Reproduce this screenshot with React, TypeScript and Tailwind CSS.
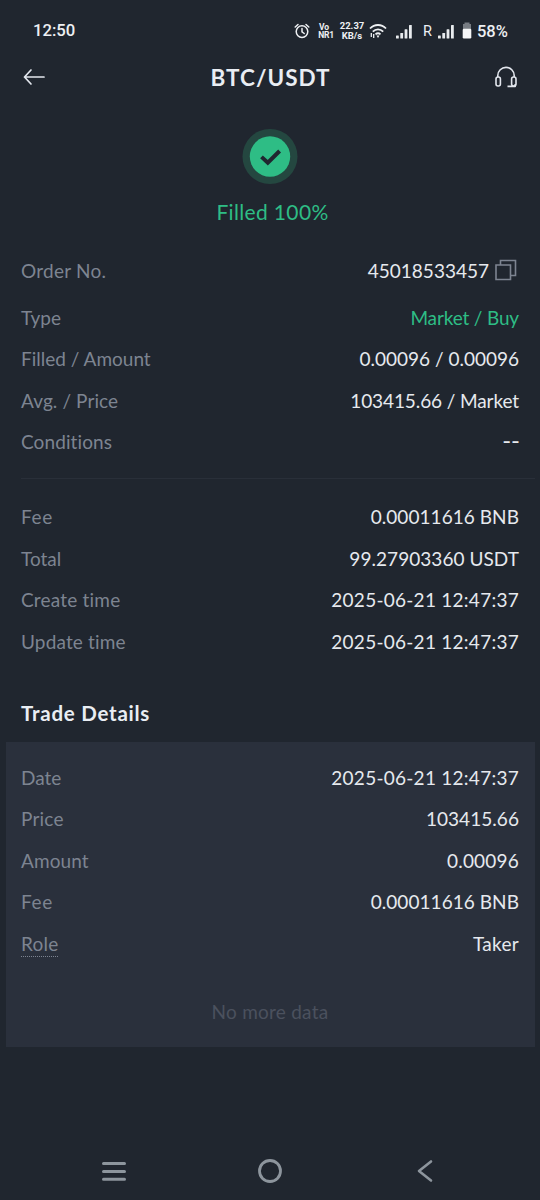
import type { ReactNode } from "react";

type RowProps = {
  label: string;
  value: ReactNode;
  labelClass?: string;
  valueClass?: string;
  height?: string;
};

function Row({ label, value, labelClass = "", valueClass = "text-[#e6e9ee]", height = "h-[41.5px]" }: RowProps) {
  return (
    <div className={`flex items-center justify-between ${height}`}>
      <span className={`text-[#7d8491] ${labelClass}`}>{label}</span>
      <span className={valueClass}>{value}</span>
    </div>
  );
}

const DATE = "text-[#e6e9ee] tracking-[0.26px]";
const AMOUNT = "text-[#e6e9ee] tracking-[0.05px]";

function Signal() {
  return (
    <svg width="16" height="15" viewBox="0 0 16 15" fill="#e8ebee">
      <rect x="0" y="11.6" width="2.8" height="3" rx=".5" />
      <rect x="4.3" y="9" width="2.8" height="5.6" rx=".5" />
      <rect x="8.6" y="5.2" width="2.8" height="9.4" rx=".5" />
      <rect x="13" y="1" width="2.8" height="13.6" rx=".5" />
    </svg>
  );
}

function StatusBar() {
  return (
    <div className="flex h-[62px] items-center pl-[33px] pr-8 font-[Roboto,sans-serif] text-[#eef0f3]">
      <span className="w-[261px] text-[16.7px] font-medium leading-5">12:50</span>
      <svg className="shrink-0" width="16" height="16" viewBox="0 0 16 16" fill="none" stroke="#eef0f3" strokeWidth="1.5" strokeLinecap="round">
        <circle cx="8" cy="8.6" r="5.8" />
        <path d="M8 5.4v3.5l2.2 1.6M1.2 4l2.8-2.5M14.8 4L12 1.5" />
      </svg>
      <div className="ml-2 flex w-4 shrink-0 flex-col items-center text-[8.5px] font-bold leading-[8px]">
        <span className="-ml-1">Vo</span>
        <span className="flex whitespace-nowrap tracking-[-0.2px]">NR1</span>
      </div>
      <div className="ml-[5px] flex w-[26px] shrink-0 flex-col items-center text-[9.5px] font-bold leading-[10px]">
        <span>22.37</span>
        <span>KB/s</span>
      </div>
      <svg className="ml-1 shrink-0" width="18" height="16" viewBox="0 0 18 16" fill="none" stroke="#eef0f3" strokeWidth="1.8">
        <path d="M1 5.5C5.5.8 12.5.8 17 5.5M3.8 8.6c3-3 7.4-3 10.4 0M6.5 11.4c1.5-1.4 3.5-1.4 5 0" />
        <path d="M7.5 12.5h3L9 15z" fill="#eef0f3" stroke="none" />
        <path d="M2.3 10v4M4.7 15v-4" strokeWidth="1.3" />
      </svg>
      <div className="ml-[9px] shrink-0"><Signal /></div>
      <span className="ml-[11px] pt-0.5 text-[14.5px] leading-5">R</span>
      <div className="ml-[6px] shrink-0"><Signal /></div>
      <svg className="ml-2 shrink-0" width="10" height="18" viewBox="0 0 10 18">
        <path d="M2.5 0.5h5v1.5h1.5v14H1V2h1.5z" fill="#777c83" />
        <rect x=".7" y="6.7" width="8.6" height="9.8" rx="1.2" fill="#f5f6f7" />
      </svg>
      <span className="ml-[5px] pt-[2px] text-[16.5px] font-medium leading-5">58%</span>
    </div>
  );
}

export default function App() {
  return (
    <div className="flex h-[1200px] w-[540px] flex-col overflow-hidden bg-[#20262f] font-[Lato,sans-serif] text-[19px] leading-6 [font-variant-ligatures:none]">
      <StatusBar />
      <header className="flex h-[30px] items-center justify-between pl-[23px] pr-[22px]">
        <svg width="22" height="18" viewBox="0 0 22 18" fill="none" stroke="#e3e7ee" strokeWidth="1.7" strokeLinecap="round" strokeLinejoin="round">
          <path d="M1.5 9H21M8 2L1.5 9 8 16" />
        </svg>
        <h1 className="pl-0.5 pt-px text-[22.5px] font-bold tracking-[1px] text-[#e9edf3]">BTC/USDT</h1>
        <svg width="24" height="22" viewBox="0 0 24 22" fill="none" stroke="#e3e7ee" strokeWidth="1.6" strokeLinejoin="round">
          <rect x="2" y="11" width="4.4" height="9" rx="2" />
          <rect x="17.6" y="11" width="4.4" height="9" rx="2" />
          <path d="M3.8 11V9.6a8.2 8.2 0 0 1 16.4 0V11M21.2 18v2.4h-7.7" />
        </svg>
      </header>
      <section className="flex flex-col items-center pt-9">
        <svg width="56" height="56" viewBox="0 0 56 56">
          <circle cx="28" cy="28.5" r="27.5" fill="#244740" />
          <circle cx="28" cy="28.5" r="20.2" fill="#2ebd85" />
          <path d="M19.5 28.9l6.3 5.8L37.6 23" fill="none" stroke="#20262f" strokeWidth="4" />
        </svg>
        <p className="mt-4 pl-[5px] text-[21px] leading-6 tracking-[0.35px] text-[#2ebd85]">Filled 100%</p>
      </section>
      <section className="mt-[22px] pl-[21px] pr-[21px]">
        <Row
          label="Order No."
          labelClass="tracking-[0.25px]"
          height="h-[49px]"
          value={
            <span className="flex items-center gap-[6px] pr-0.5">
              45018533457
              <svg className="mb-px" width="22" height="22" viewBox="0 0 22 22" fill="none" stroke="#7d8491" strokeWidth="1.6">
                <path d="M1 6h14.5v14.5H1zM5.5 5.5V1.5h15v15h-4.5" />
              </svg>
            </span>
          }
        />
        <div className="h-0.5" />
        <Row label="Type" value="Market / Buy" valueClass="text-[#2ebd85] tracking-[-0.15px]" />
        <Row label="Filled / Amount" value="0.00096 / 0.00096" />
        <Row label="Avg. / Price" labelClass="tracking-[0.1px]" value="103415.66 / Market" valueClass="text-[#e6e9ee] tracking-[-0.1px]" />
        <Row label="Conditions" labelClass="tracking-[0.1px]" value="--" valueClass="text-[#e6e9ee] text-[24px] -mr-px pb-1" />
      </section>
      <div className="ml-[21px] mr-[5px] mt-[15px] h-px bg-[#292f39]" />
      <section className="mt-[17.5px] px-[21px]">
        <Row label="Fee" labelClass="tracking-[0.7px]" value="0.00011616 BNB" valueClass={AMOUNT} />
        <Row label="Total" value="99.27903360 USDT" valueClass={AMOUNT} />
        <Row label="Create time" labelClass="tracking-[0.2px]" value="2025-06-21 12:47:37" valueClass={DATE} />
        <Row label="Update time" labelClass="tracking-[0.15px]" value="2025-06-21 12:47:37" valueClass={DATE} />
      </section>
      <h2 className="ml-[21px] mt-[38.5px] text-[20.5px] font-bold leading-6 tracking-[0.75px] text-[#e9edf3]">Trade Details</h2>
      <section className="ml-[6px] mr-[5px] mt-[17px] h-[305px] bg-[#2a303c] pl-[15px] pr-4 pt-[15px]">
        <Row label="Date" value="2025-06-21 12:47:37" valueClass={DATE} />
        <Row label="Price" labelClass="tracking-[0.2px]" value="103415.66" valueClass={AMOUNT} />
        <Row label="Amount" labelClass="tracking-[0.1px]" value="0.00096" valueClass="text-[#e6e9ee] tracking-[0.2px]" />
        <Row label="Fee" labelClass="tracking-[0.7px]" value="0.00011616 BNB" valueClass={AMOUNT} />
        <Row
          label="Role"
          labelClass="mt-px border-b border-dotted border-[#7d8491] tracking-[0.2px]"
          value="Taker"
          valueClass="text-[#e6e9ee] tracking-[0.3px]"
        />
        <p className="mt-[35px] text-center tracking-[0.25px] text-[#4b515e]">No more data</p>
      </section>
      <nav className="mt-auto flex h-[58px] items-center justify-between pl-[101px] pr-[107px]">
        <svg width="26" height="22" viewBox="0 0 26 22" stroke="#8d959d" strokeWidth="3" strokeLinecap="round">
          <path d="M2.5 3.5h21M2.5 11.5h21M2.5 19.3h21" />
        </svg>
        <svg className="-ml-1" width="26" height="26" viewBox="0 0 26 26" fill="none" stroke="#8d959d" strokeWidth="2.8">
          <circle cx="13" cy="13" r="10.5" />
        </svg>
        <svg width="16" height="24" viewBox="0 0 16 24" fill="none" stroke="#8d959d" strokeWidth="2.6" strokeLinecap="round" strokeLinejoin="round">
          <path d="M14 2.5L2 12l12 9.5" />
        </svg>
      </nav>
    </div>
  );
}
